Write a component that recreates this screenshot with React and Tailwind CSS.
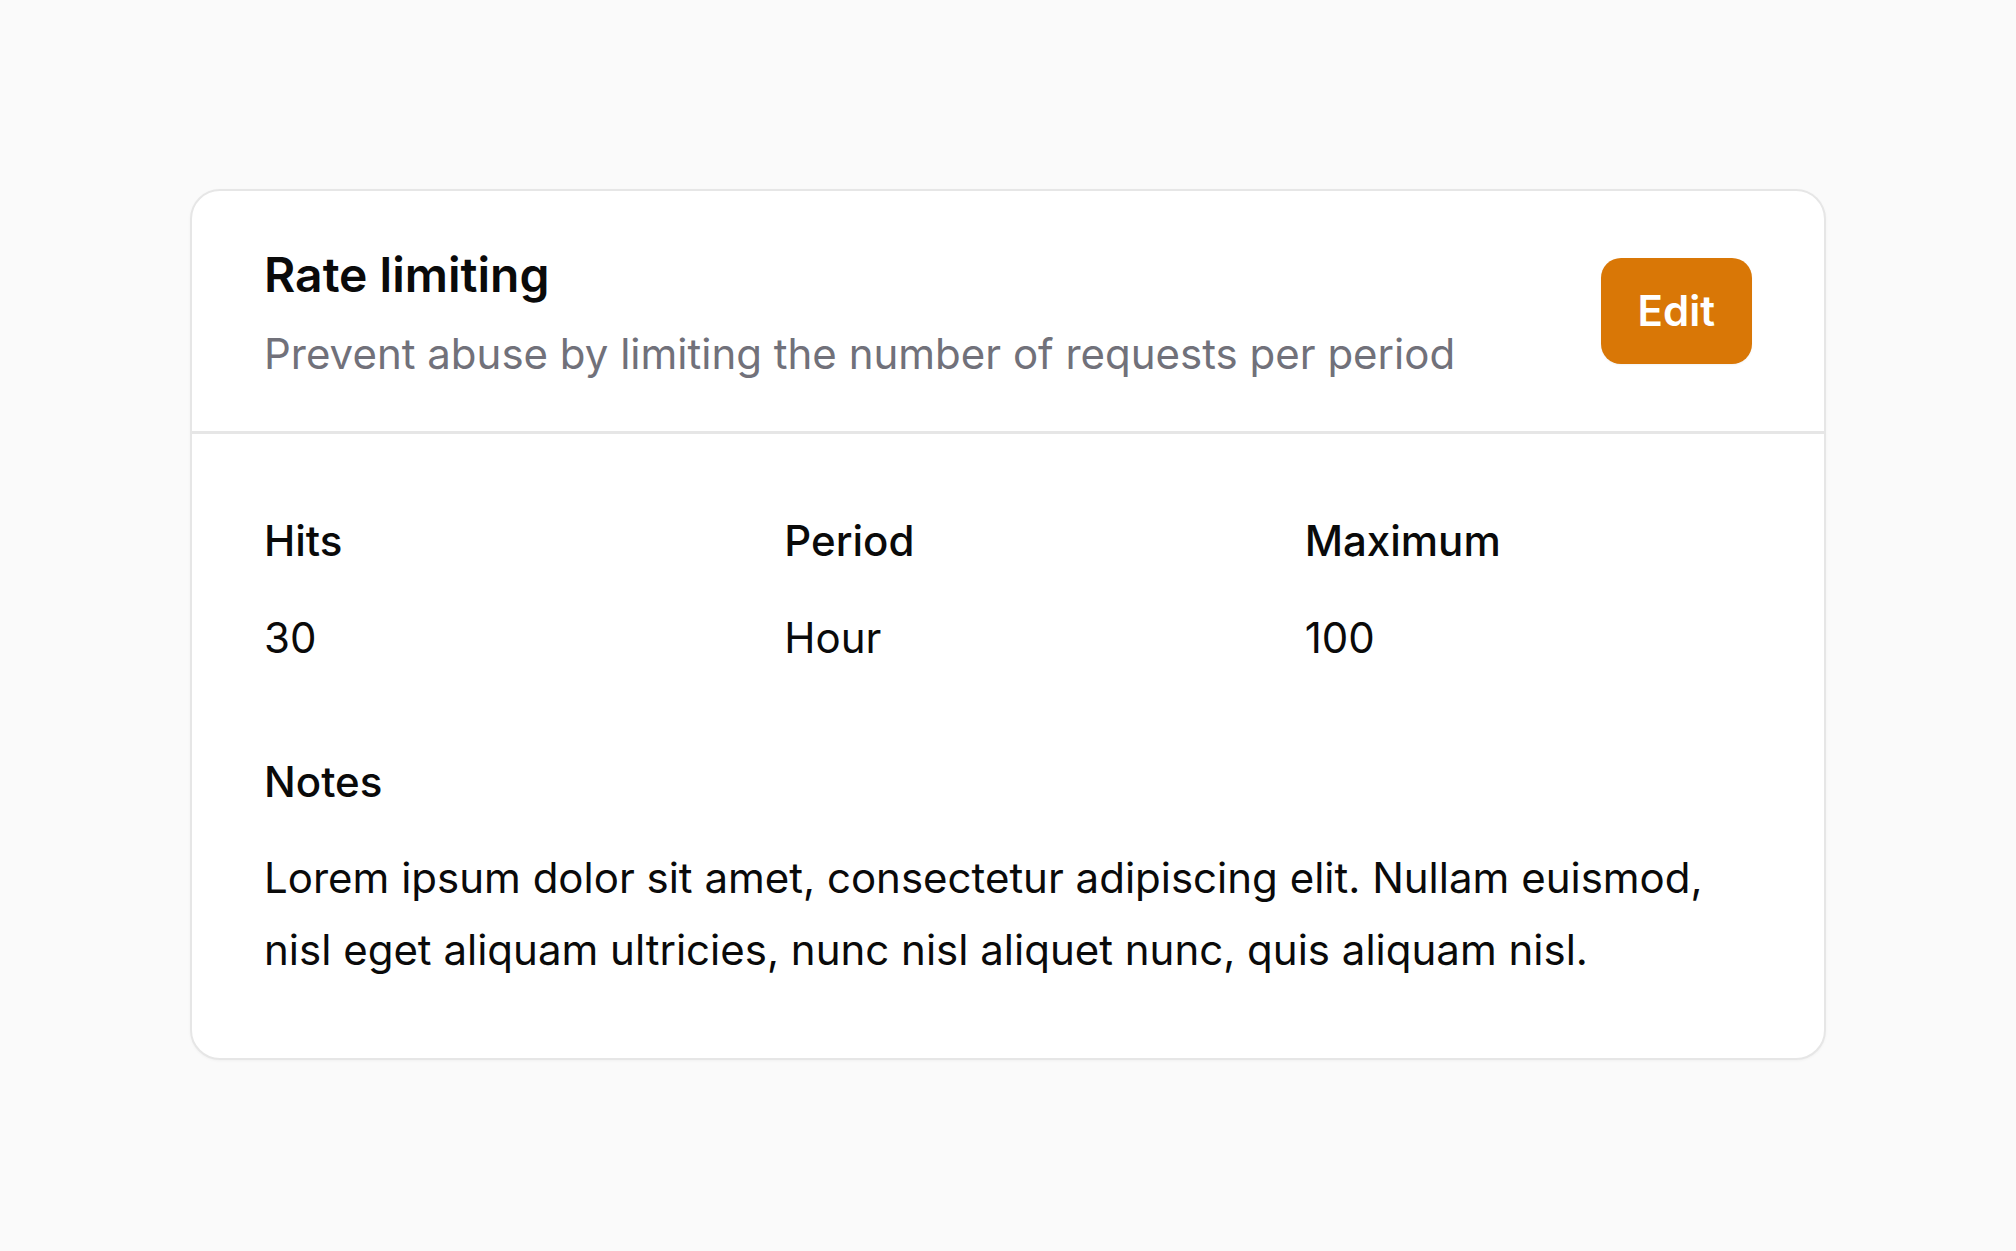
export default function App() {
    const stats = [
        { label: "Hits", value: "30" },
        { label: "Period", value: "Hour" },
        { label: "Maximum", value: "100" },
    ];

    return (
        <div
            className="min-h-screen bg-[#fafafa] pt-[189px] px-[190px] text-[#0a0a0a]"
            style={{ fontFamily: "Inter, 'Noto Sans', sans-serif" }}
        >
            <div className="bg-white border-2 border-[#e6e6e6] rounded-[30px] shadow-[0_1px_3px_rgba(0,0,0,0.04)]">
                {/* Header */}
                <div className="flex items-center justify-between px-[72px] py-[49px] border-b-[3px] border-[#e6e6e6]">
                    <div>
                        <h2 className="text-[48px] leading-[70px] font-semibold">
                            Rate limiting
                        </h2>
                        <p className="mt-[16px] text-[42px] leading-[56px] text-[#71717a]">
                            Prevent abuse by limiting the number of requests per period
                        </p>
                    </div>
                    <button className="bg-[#d97706] text-white text-[42px] leading-[52px] font-semibold px-[37px] py-[27px] rounded-[20px] shadow-[0_1px_2px_rgba(0,0,0,0.05)]">
                        Edit
                    </button>
                </div>

                {/* Body */}
                <div className="px-[72px] pt-[75px] pb-[72px]">
                    <div className="grid grid-cols-3 gap-x-[73px]">
                        {stats.map((s) => (
                            <div key={s.label}>
                                <div className="text-[42px] leading-[64px] font-medium">{s.label}</div>
                                <div className="mt-[33px] text-[42px] leading-[64px]">{s.value}</div>
                            </div>
                        ))}
                    </div>

                    <div className="mt-[80px]">
                        <div className="text-[42px] leading-[64px] font-medium">Notes</div>
                        <p className="mt-[28px] text-[42px] leading-[72px]">
                            Lorem ipsum dolor sit amet, consectetur adipiscing elit. Nullam euismod,
                            nisl eget aliquam ultricies, nunc nisl aliquet nunc, quis aliquam nisl.
                        </p>
                    </div>
                </div>
            </div>
        </div>
    );
}
